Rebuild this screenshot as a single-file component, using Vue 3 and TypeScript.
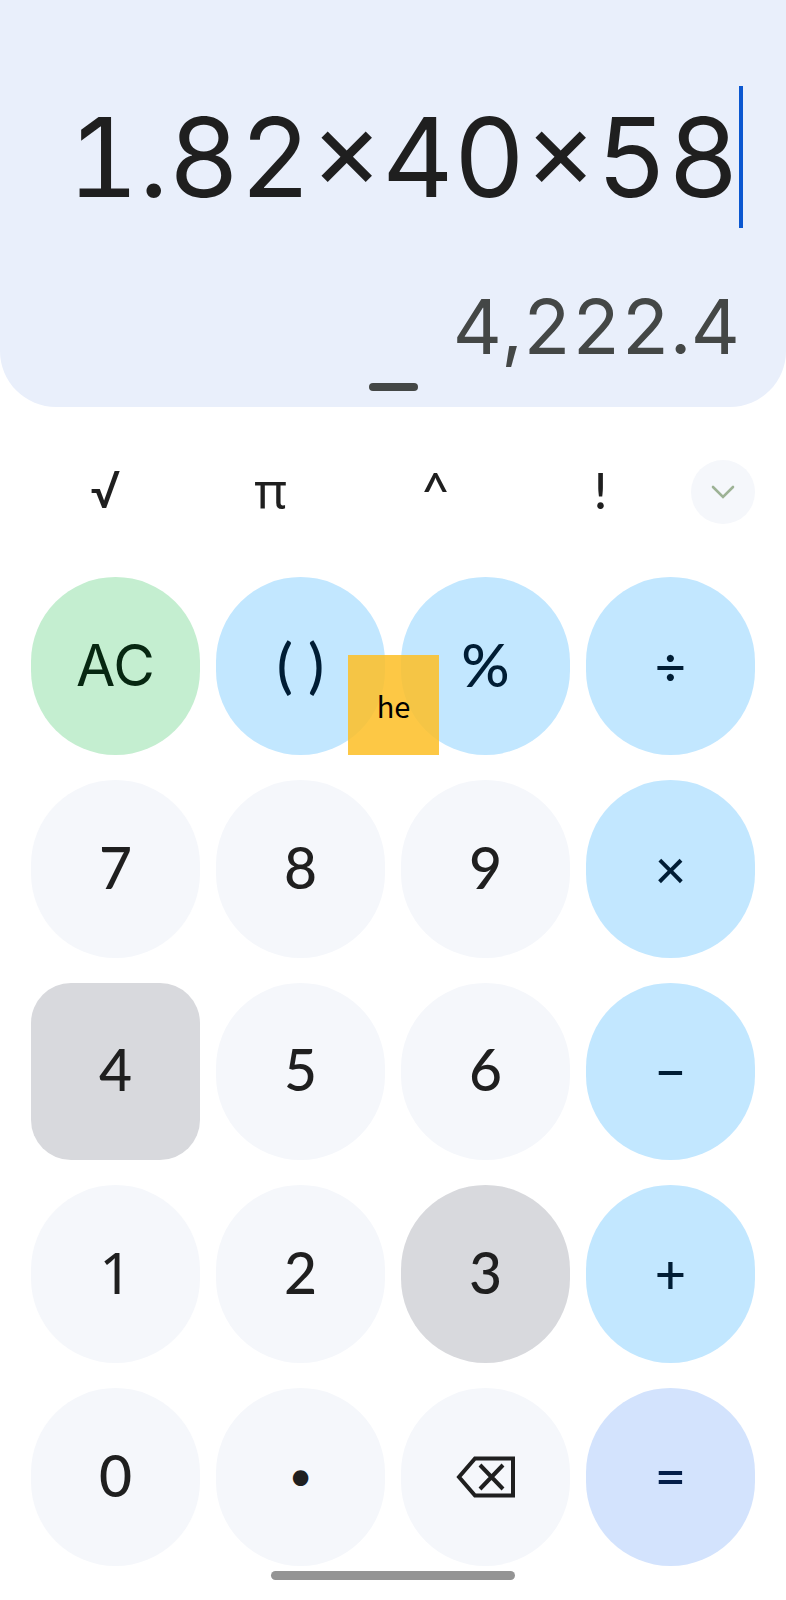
<script setup lang="ts">
import { ref } from 'vue'

interface Key {
  label: string
  name: string
  tone: 'clear' | 'operator' | 'digit' | 'equals'
  pressed?: 'square' | 'round'
  glyph?: 'one' | 'dot' | 'tall'
}

const expression = ref('1.82×40×58')
const result = ref('4,222.4')

const functions = [
  { label: '√', name: 'Square root', glyph: 'root' },
  { label: 'π', name: 'Pi', glyph: 'pi' },
  { label: '^', name: 'Power', glyph: '' },
  { label: '!', name: 'Factorial', glyph: '' },
]

const keys: Key[] = [
  { label: 'AC', name: 'All clear', tone: 'clear' },
  { label: '( )', name: 'Parentheses', tone: 'operator', glyph: 'tall' },
  { label: '%', name: 'Percent', tone: 'operator', glyph: 'tall' },
  { label: '÷', name: 'Divide', tone: 'operator' },
  { label: '7', name: '7', tone: 'digit' },
  { label: '8', name: '8', tone: 'digit' },
  { label: '9', name: '9', tone: 'digit' },
  { label: '×', name: 'Multiply', tone: 'operator' },
  { label: '4', name: '4', tone: 'digit', pressed: 'square' },
  { label: '5', name: '5', tone: 'digit' },
  { label: '6', name: '6', tone: 'digit' },
  { label: '−', name: 'Subtract', tone: 'operator' },
  { label: '1', name: '1', tone: 'digit', glyph: 'one' },
  { label: '2', name: '2', tone: 'digit' },
  { label: '3', name: '3', tone: 'digit', pressed: 'round' },
  { label: '+', name: 'Add', tone: 'operator' },
  { label: '0', name: '0', tone: 'digit' },
  { label: '•', name: 'Decimal point', tone: 'digit', glyph: 'dot' },
  { label: '⌫', name: 'Backspace', tone: 'digit' },
  { label: '=', name: 'Equals', tone: 'equals' },
]
</script>

<template>
  <main class="calculator">
    <section class="display" aria-label="Display">
      <div class="entry">
        <input v-model="expression" class="expression" type="text" aria-label="Expression" />
        <span class="caret"></span>
      </div>
      <output class="result">{{ result }}</output>
      <span class="handle"></span>
    </section>

    <div class="functions">
      <button v-for="fn in functions" :key="fn.name" class="fn" :class="fn.glyph" type="button" :aria-label="fn.name">
        {{ fn.label }}
      </button>
      <button class="expand" type="button" aria-label="More functions">
        <svg viewBox="0 0 24 14" width="24" height="14" fill="none" stroke="#9db295" stroke-width="2.6" stroke-linecap="round">
          <path d="M2 2 12 12 22 2" />
        </svg>
      </button>
    </div>

    <div class="pad">
      <button
        v-for="key in keys"
        :key="key.name"
        type="button"
        class="key"
        :class="[key.tone, key.pressed && `pressed-${key.pressed}`, key.glyph]"
        :aria-label="key.name"
      >
        <svg v-if="key.name === 'Backspace'" viewBox="0 0 60 42" width="60" height="42" fill="none" stroke="#1f1f1f" stroke-width="4">
          <path d="M19 2.5H57V39.5H19L3 21Z" />
          <path d="M24 9 47 33M47 9 24 33" />
        </svg>
        <span v-else class="label">{{ key.label }}</span>
      </button>
      <div class="note">he</div>
    </div>

    <div class="home-bar"></div>
  </main>
</template>

<style>
body {
  margin: 0;
  background: #fff;
}
</style>

<style scoped>
.calculator {
  box-sizing: border-box;
  display: flex;
  flex-direction: column;
  min-height: 100vh;
  padding-bottom: 20px;
  font-family: Lato, "Noto Sans", sans-serif;
  color: #1f1f1f;
}

button {
  padding: 0;
  border: 0;
  background: none;
  color: inherit;
  font-family: inherit;
}

.display {
  box-sizing: border-box;
  display: flex;
  flex-direction: column;
  align-items: stretch;
  padding: 86px 43px 16px 43px;
  border-radius: 0 0 56px 56px;
  background: #e9effb;
}

.entry {
  display: flex;
  align-items: stretch;
  height: 142px;
}

.expression {
  flex: 1;
  min-width: 0;
  padding: 0;
  border: 0;
  outline: 0;
  background: none;
  color: inherit;
  font: 400 110px/142px Inter, sans-serif;
  font-variant-numeric: tabular-nums;
  text-align: right;
}

.caret {
  width: 4px;
  background: #0b57d0;
}

.result {
  margin-top: 53px;
  padding-right: 3px;
  color: #444746;
  font: 400 76px/90px Inter, sans-serif;
  font-variant-numeric: tabular-nums;
  text-align: right;
}

.handle {
  align-self: center;
  width: 49px;
  height: 8px;
  margin-top: 12px;
  border-radius: 4px;
  background: #444746;
}

.functions {
  display: flex;
  align-items: center;
  height: 64px;
  padding: 0 31px 0 23px;
  margin: 53px 0;
}

.fn {
  flex: 1;
  height: 64px;
  padding-bottom: 4px;
  font-size: 50px;
  font-weight: 500;
  line-height: 60px;
}

.root {
  font-family: Inter, sans-serif;
  font-weight: 400;
}

.pi {
  font-family: "Noto Sans", sans-serif;
  font-weight: 400;
}

.expand {
  display: flex;
  align-items: center;
  justify-content: center;
  width: 64px;
  height: 64px;
  margin-left: 8px;
  border-radius: 50%;
  background: #f5f7fb;
}

.pad {
  position: relative;
  flex: 1;
  display: grid;
  grid-template-columns: repeat(4, 1fr);
  grid-auto-rows: 1fr;
  gap: 25px 16px;
  padding: 0 31px;
}

.key {
  display: flex;
  align-items: center;
  justify-content: center;
  min-height: 100px;
  border-radius: 999px;
  font-size: 57px;
  font-weight: 500;
  line-height: 68px;
}

.clear {
  background: #c4eed0;
  color: #072711;
}

.clear .label {
  font-family: Inter, sans-serif;
  font-weight: 400;
}

.operator {
  background: #c2e7ff;
  color: #001d35;
  font-size: 54px;
}

.digit {
  background: #f5f7fb;
}

.digit .label {
  padding-bottom: 4px;
}

.equals {
  background: #d3e3fd;
  color: #041e49;
  font-size: 54px;
}

.equals .label {
  padding-bottom: 2px;
}

.pressed-square,
.pressed-round {
  background: #d8d9dd;
}

.pressed-square {
  border-radius: 40px;
}

.tall {
  font-size: 60px;
}

.tall .label {
  padding-bottom: 4px;
}

.one .label {
  font-family: "Noto Sans", sans-serif;
  font-weight: 400;
}

.dot {
  font-size: 40px;
}

.note {
  position: absolute;
  top: 78px;
  left: 50%;
  width: 91px;
  margin-left: -45px;
  background: rgba(253, 191, 38, 0.86);
  color: #000;
  font: 400 29px/100px "Noto Sans CJK SC", "Noto Sans", sans-serif;
  text-align: center;
}

.home-bar {
  align-self: center;
  width: 31%;
  height: 9px;
  margin-top: 5px;
  border-radius: 5px;
  background: #949494;
}
</style>
